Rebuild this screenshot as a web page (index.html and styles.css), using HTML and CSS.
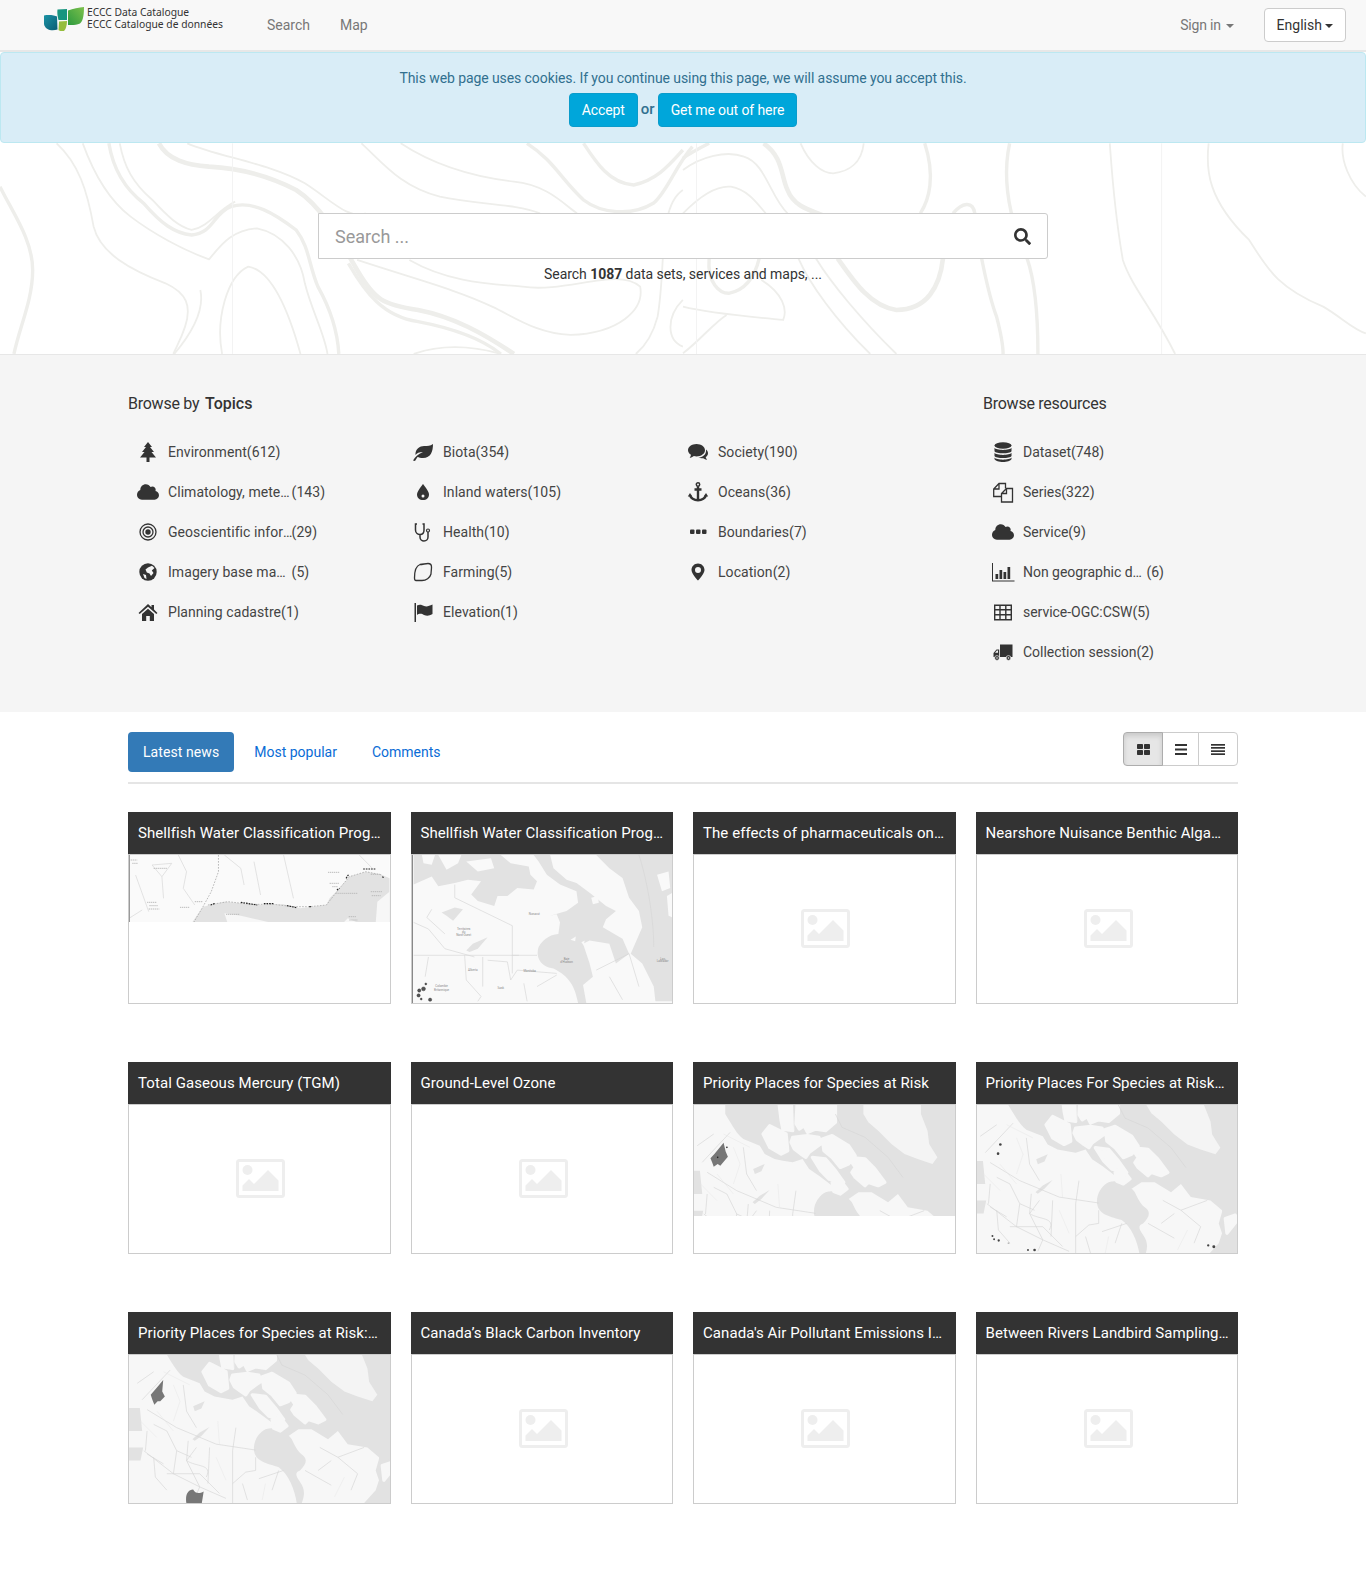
FILE: index.html
```html
<!DOCTYPE html>
<html lang="en">
<head>
<meta charset="utf-8">
<title>ECCC Data Catalogue</title>
<link rel="stylesheet" href="styles.css">
</head>
<body>
<svg class="defs" aria-hidden="true">
  <defs>
    <symbol id="i-cloud" viewBox="0 -64 640 640"><path d="M537.6 226.6c4.1-10.7 6.4-22.4 6.4-34.6 0-53-43-96-96-96-19.7 0-38.1 6-53.3 16.2C367 64.2 315.3 32 256 32c-88.4 0-160 71.6-160 160 0 2.7.1 5.4.2 8.1C40.2 219.8 0 273.2 0 336c0 79.5 64.5 144 144 144h368c70.7 0 128-57.3 128-128 0-61.9-44-113.6-102.4-125.4z"/></symbol>
    <symbol id="i-photo" viewBox="0 0 49 39">
      <rect x="1.5" y="1.5" width="46" height="36" rx="2" fill="none" stroke="#eee" stroke-width="3"/>
      <circle cx="11.5" cy="11" r="5" fill="#eee"/>
      <path d="M6.500 32v-5.500l6.500-6.500 5 5 14-14 10.500 10.500V32z" fill="#eee"/>
    </symbol>
    <g id="m-canada">
      <rect x="-60" y="-60" width="912" height="570" fill="#f7f7f7"/>
      <path class="w" d="M95 -60V0C120 40 130 60 150 75L200 95L215 120L245 135L270 140L300 145L330 135L350 165L380 185L420 215L440 240L470 255L500 235L540 235L590 265L620 240L650 280L710 290L745 320L745 340L792 335H860V-60Z"/>
      <path class="w" d="M400 235C430 225 460 240 480 265C490 285 495 300 515 315C530 330 520 345 505 360C490 365 490 375 505 395C520 415 520 435 510 460L495 460C490 420 470 370 440 350C410 340 370 335 365 300C362 270 380 245 400 235Z"/>
      <path class="w" d="M745 325L860 335V470H690L735 420L745 390L735 360Z"/>
      <path class="w" d="M-60 170H18L25 240H-60ZM-60 290H28L20 330H-60Z"/>
      <path d="M515 -60H690V0L710 50L715 90L740 130L725 150L680 135L640 120L600 90L560 50L530 25L515 0Z" fill="#f4f4f4"/>
      <path class="l grow" d="M255 -60H300V30L300 50L270 45L265 20ZM310 -60H430V25L400 50L370 45L345 55L335 35L320 45L305 20ZM230 35L250 45L280 60L285 110L265 120L230 100L210 60ZM300 70L345 65L380 70L385 90L350 115L340 130L325 120L305 105L295 85ZM390 75L420 65L470 95L490 125L470 150L445 160L420 130L395 110ZM470 130L520 135L550 165L580 205L560 215L530 205L520 215L490 190L480 175L490 160ZM420 205L450 205L465 225L445 240L425 232ZM360 130L400 135L430 170L455 205L410 195L385 170ZM755 345L785 335L792 350L760 390Z"/>
      <path class="w" d="M300 -60L304 50L310 -60ZM180 165L215 150L205 172L185 180ZM178 265L200 245L230 228L205 255L185 270Z"/>
      <path d="M40 175L130 230L250 280L370 298M25 145L110 55M310 230L300 300V460M230 290L225 400M10 95L60 60M160 330L165 270M30 300L120 370L200 410L280 445M100 370L200 370L260 430M60 220L100 240L130 300L120 370M40 310L90 340M160 330C190 350 240 340 220 380M370 320V360L340 365L300 400M620 320L680 370L660 420M560 360L600 330M440 360L420 420M150 100L160 180L190 230M430 0L450 40L520 70L590 130L635 190M40 240L35 300M60 320L65 380L100 420M130 300L175 320M330 400L345 450M380 385L455 360M565 290L620 320L700 290M520 360L600 405M190 290L160 330L200 410L185 445" class="ln"/>
      <path d="M120 100L140 150L120 210M70 180L120 240M255 210L260 280M90 60L170 100M20 210L70 260M250 320L280 390M400 400L390 450M640 380L610 440" class="ln2"/>
    </g>
  </defs>
</svg>

<header class="navbar">
  <a class="brand">
    <svg class="brand-mark" viewBox="0 0 40 24" aria-hidden="true">
      <defs>
        <linearGradient id="lg1" x1="0" y1="0" x2="1" y2="1"><stop offset="0" stop-color="#1b93a5"/><stop offset="1" stop-color="#0b5c74"/></linearGradient>
        <linearGradient id="lg2" x1="0" y1="1" x2="1" y2="0"><stop offset="0" stop-color="#2d9a3f"/><stop offset="1" stop-color="#7cc04b"/></linearGradient>
      </defs>
      <path d="M0 8.500C5 7.500 11 8.500 13 9.500L13.500 22.500C8 24.500 1 23 0 17Z" fill="url(#lg1)"/>
      <path d="M13.500 2.500L23 2V13L14.500 13C13.500 9 13 6 13.500 2.500Z" fill="#18957f"/>
      <path d="M15 14.500L23 14C23 18 22 22 20 24C17 24 15 24 14.500 23Z" fill="#95bd3c"/>
      <path d="M24 3.500C29 1.500 35 .5 40 0C40 6 39.500 14 36 16.500C32 18.500 27 18 24 18Z" fill="url(#lg2)"/>
    </svg>
    <span class="brand-text"><span>ECCC Data Catalogue</span><span>ECCC Catalogue de données</span></span>
  </a>
  <nav class="nav-links"><a>Search</a><a>Map</a></nav>
  <div class="nav-right">
    <a class="signin">Sign in <i class="caret"></i></a>
    <button class="lang">English <i class="caret"></i></button>
  </div>
</header>

<div class="hero">
  <svg class="topo" viewBox="0 0 1366 302" preserveAspectRatio="none" aria-hidden="true">
    <g transform="translate(0,-52)">
      <g transform="scale(.4355,.3333)">
        <path class="t2" d="M0 560C30 640 75 720 75 810C75 900 45 980 32 1062"/>
        <path class="t1" d="M130 430C180 490 200 570 215 680C230 760 300 810 380 850C430 880 440 920 425 980C415 1020 405 1040 398 1062"/>
        <path class="t2" d="M250 430C260 510 290 570 330 610C370 670 400 700 440 705C490 700 490 640 530 620C580 600 630 640 680 690C710 740 710 800 730 860C760 930 775 990 778 1062"/>
        <path class="t1" d="M275 430C285 500 305 550 350 600C385 650 410 680 440 690C480 680 500 630 540 605"/>
        <path class="t1" d="M190 430C215 520 250 600 300 650C350 700 420 750 480 778C505 740 530 690 590 685C650 700 690 770 700 850C715 930 745 1000 752 1062"/>
        <path class="t3" d="M365 430C385 480 430 495 480 500C560 505 620 530 680 570C740 620 780 720 820 810C860 900 880 915 960 930C1040 950 1110 1000 1180 1062"/>
        <path class="t1" d="M430 430C500 470 620 490 700 550C760 600 800 660 840 640"/>
        <path class="t1" d="M830 430C880 490 920 560 1010 590C1100 615 1180 610 1240 640"/>
        <path class="t1" d="M920 430C990 490 1080 530 1180 545C1260 555 1300 620 1325 640"/>
        <path class="t2" d="M1210 430C1270 480 1290 540 1340 600C1380 640 1450 650 1500 610C1530 580 1550 500 1590 440"/>
        <path class="t2" d="M1340 430C1370 490 1400 550 1455 555C1510 540 1540 490 1568 450"/>
        <path class="t1" d="M940 780C1020 840 1100 850 1200 860C1300 880 1420 800 1470 860C1480 930 1420 1000 1310 1005C1230 1000 1180 950 1130 920C1050 870 960 840 820 780"/>
        <path class="t1" d="M510 1062C495 960 520 830 570 800C620 810 660 920 690 1062"/>
        <path class="t1" d="M400 1062C440 1000 470 930 460 870"/>
        <path class="t2" d="M800 790C840 880 880 950 960 965C1040 985 1110 1020 1150 1062"/>
        <path class="t1" d="M950 1062C1020 1030 1090 1040 1150 1062"/>
        <path class="t1" d="M1568 570C1510 620 1530 800 1510 950C1500 1000 1480 1040 1460 1062"/>
        <path class="t1" d="M1568 900C1530 950 1530 1020 1568 1040"/>
        <path class="t0" d="M534 430V1062"/>
      </g>
      <g transform="translate(683,0) scale(.4355,.3333)">
        <path class="t3" d="M185 430C230 470 225 530 240 570C255 620 290 630 330 650"/>
        <path class="t2" d="M60 430C30 450 15 460 0 475"/>
        <path class="t1" d="M270 430C290 490 320 520 345 520C380 515 410 490 415 430"/>
        <path class="t2" d="M555 430C580 530 565 600 545 640"/>
        <path class="t2" d="M750 430C735 520 745 600 760 670"/>
        <path class="t2" d="M620 640C640 610 665 600 670 640C675 720 700 880 720 950C730 1000 735 1040 735 1062"/>
        <path class="t3" d="M597 775C590 860 560 930 490 930C430 920 390 840 355 775"/>
        <path class="t2" d="M60 775C55 850 85 880 105 880C145 870 165 830 175 775"/>
        <path class="t2" d="M790 775C810 850 815 960 815 1062"/>
        <path class="t1" d="M980 430C985 520 990 630 1010 780C1030 860 1080 930 1130 1062"/>
        <path class="t1" d="M1207 430C1200 510 1205 600 1300 720C1340 800 1360 860 1470 920C1510 950 1540 990 1568 1000"/>
        <path class="t1" d="M1515 430C1510 480 1530 550 1568 590"/>
        <path class="t1" d="M0 510C40 470 100 450 140 470C190 490 200 590 240 640"/>
        <path class="t1" d="M0 640C30 600 70 555 110 560C150 570 170 610 190 640"/>
        <path class="t1" d="M0 920C60 940 150 950 230 960C240 930 230 880 180 840"/>
        <path class="t1" d="M0 1060C40 1020 70 970 100 945"/>
        <path class="t1" d="M265 775C290 850 350 960 430 1062"/>
        <path class="t1" d="M305 775C340 850 410 960 490 1062"/>
        <path class="t0" d="M31 430V1062M1099 430V1062"/>
      </g>
    </g>
  </svg>
  <div class="alert">
    <p>This web page uses cookies. If you continue using this page, we will assume you accept this.</p>
    <div class="alert-actions"><a class="btn-cookie">Accept</a><span class="or">or</span><a class="btn-cookie">Get me out of here</a></div>
  </div>
  <div class="search">
    <div class="search-box">
      <span class="search-ph">Search ...</span>
      <svg class="search-icon" viewBox="0 0 512 512" aria-hidden="true"><path d="M505 442.700L405.300 343c-4.500-4.500-10.600-7-17-7H372c27.600-35.300 44-79.700 44-128C416 93.100 322.900 0 208 0S0 93.100 0 208s93.100 208 208 208c48.300 0 92.700-16.400 128-44v16.300c0 6.400 2.500 12.500 7 17l99.700 99.700c9.400 9.400 24.600 9.400 33.900 0l28.300-28.300c9.400-9.400 9.400-24.600.1-34zM208 336c-70.700 0-128-57.200-128-128 0-70.700 57.200-128 128-128 70.700 0 128 57.200 128 128 0 70.700-57.200 128-128 128z"/></svg>
    </div>
    <p class="search-sub">Search <b>1087</b> data sets, services and maps, ...</p>
  </div>
</div>

<section class="browse">
  <div class="browse-inner">
    <div class="topics">
      <h2 class="browse-title">Browse by <b>Topics</b></h2>
      <div class="topic-grid">
        <ul class="list">
          <li><svg class="ico" viewBox="0 0 22 22"><path d="M11 1L15 6H13L17 11H14.500L19 16.500H12.500V21H9.500V16.500H3L7.500 11H5L9 6H7Z"/></svg><a>Environment(612)</a></li>
          <li><svg class="ico"><use href="#i-cloud"/></svg><a><span class="cut">Climatology, meteorology, atmosphere</span> (143)</a></li>
          <li><svg class="ico" viewBox="0 0 22 22"><circle cx="11" cy="11" r="8" fill="none" stroke="#333" stroke-width="1.300"/><circle cx="11" cy="11" r="5" fill="none" stroke="#333" stroke-width="1.300"/><circle cx="11" cy="11" r="2.700"/></svg><a><span class="cut">Geoscientific information</span> (29)</a></li>
          <li><svg class="ico" viewBox="0 0 22 22"><circle cx="11" cy="11" r="8.700"/><path d="M11 6.500L15 4.800L17.500 7L14.800 9.500L16.500 12L14 15L12.500 12.500L9.800 11.500L8.500 8.500ZM6 13L9 14L9.500 18L7.500 17Z" fill="#f5f5f5"/></svg><a><span class="cut">Imagery base maps earth cover</span> (5)</a></li>
          <li><svg class="ico" viewBox="0 0 22 22"><path d="M11 3L14.500 6.200V4H17V8.500L20.500 12L19.300 13L11 5.800L2.700 13L1.500 12ZM5 13L11 7.800L17 13V20H12.800V15H9.200V20H5Z"/></svg><a>Planning cadastre(1)</a></li>
        </ul>
        <ul class="list">
          <li><svg class="ico" viewBox="0 0 22 22"><path d="M1 19.500C3 16 6 13 11 11C7 11 5 12 3.500 14C3 8 8 5 12 5C16 5 18 5 21 3C21 10 19 17 11 17C8.500 17 7 16.500 5.500 16L3 20Z"/></svg><a>Biota(354)</a></li>
          <li><svg class="ico" viewBox="0 0 22 22"><path d="M11 3C11 3 17 10 17 13.500C17 17 14.500 19 11 19C7.500 19 5 17 5 13.500C5 10 11 3 11 3Z"/><circle cx="11" cy="15" r="1.500" fill="#f5f5f5"/></svg><a>Inland waters(105)</a></li>
          <li><svg class="ico" viewBox="0 0 22 22"><path d="M5 3H3.500V9C3.500 12 6 13.500 8 13.500C10 13.500 12 12 12 9V3H10.500M8 13.500V16C8 18.500 10 20 12 20C14.500 20 16 18 16 16V11" fill="none" stroke="#333" stroke-width="1.500"/><circle cx="16" cy="9.500" r="1.500" fill="none" stroke="#333" stroke-width="1.200"/></svg><a>Health(10)</a></li>
          <li><svg class="ico" viewBox="0 0 22 22"><path d="M8 3.500C11 3.500 13 2.500 16 2.500C18 2.500 19.500 3.500 19.500 6C19.500 9 19 11 19 13C18 17 14 19.500 10 19.500C8 19.500 6 19.500 4 19.500C3 19.500 2.500 18.500 2.500 17C2.500 10 3.500 5 8 3.500Z" fill="none" stroke="#333" stroke-width="1.300"/></svg><a>Farming(5)</a></li>
          <li><svg class="ico" viewBox="0 0 22 22"><path d="M2.500 2H4V21H2.500ZM5 4.500C8 3 10 4 12 5C15 6 17 5 20.500 3.500V13C17 15 15 15 12 14C10 13 8 12 5 14Z"/></svg><a>Elevation(1)</a></li>
        </ul>
        <ul class="list">
          <li><svg class="ico" viewBox="0 0 22 22"><path d="M9.500 3C14.200 3 18 5.800 18 9.200C18 12.600 14.200 15.400 9.500 15.400C8.600 15.400 7.700 15.300 6.900 15.100C5.600 16.100 4 16.700 2.700 17C3.200 16.200 3.800 15 4 13.800C2.200 12.700 1 11 1 9.200C1 5.800 4.800 3 9.500 3Z"/><path d="M19 8.500C20.300 9.500 21 10.800 21 12.200C21 13.800 20 15.200 18.700 16.100C18.900 17.200 19.600 18.300 20 19C18.700 18.700 17.300 18.100 16.200 17.200C14.700 17.500 12.700 17.300 11.300 16.600C15.700 16.400 19.700 13.500 19 8.500Z"/></svg><a>Society(190)</a></li>
          <li><svg class="ico" viewBox="0 0 22 22"><circle cx="11" cy="3.500" r="1.700" fill="none" stroke="#333" stroke-width="1.500"/><path d="M11 5.300V19M7.500 8.500H14.500" fill="none" stroke="#333" stroke-width="2.400"/><path d="M3 14C3.500 17 7 19.200 11 19.200C15 19.200 18.500 17 19 14" fill="none" stroke="#333" stroke-width="2.400"/><path d="M.8 15.500L3 12L5.200 15.500ZM16.800 15.500L19 12L21.200 15.500Z"/></svg><a>Oceans(36)</a></li>
          <li><svg class="ico" viewBox="0 0 22 22"><rect x="3" y="8.500" width="4.500" height="4.500" rx="1"/><rect x="9" y="8.500" width="4.500" height="4.500" rx="1"/><rect x="15" y="8.500" width="4.500" height="4.500" rx="1"/></svg><a>Boundaries(7)</a></li>
          <li><svg class="ico" viewBox="0 0 22 22"><path fill-rule="evenodd" d="M11 2.500C7.400 2.500 4.500 5.400 4.500 9C4.500 13 11 19.500 11 19.500C11 19.500 17.500 13 17.500 9C17.500 5.400 14.600 2.500 11 2.500ZM11 6A3 3 0 1 1 11 12A3 3 0 1 1 11 6Z"/></svg><a>Location(2)</a></li>
        </ul>
      </div>
    </div>
    <div class="resources">
      <h2 class="browse-title">Browse resources</h2>
      <ul class="list">
        <li><svg class="ico" viewBox="0 0 22 22"><ellipse cx="11" cy="4.500" rx="8.500" ry="3.300"/><path d="M2.500 6.800C4 9.600 18 9.600 19.500 6.800V10.200C18 13 4 13 2.500 10.200ZM2.500 11.800C4 14.600 18 14.600 19.500 11.800V15C18 17.800 4 17.800 2.500 15ZM2.500 16.600C4 19.400 18 19.400 19.500 16.600V18C18 22 4 22 2.500 18Z"/></svg><a>Dataset(748)</a></li>
        <li><svg class="ico" viewBox="0 0 22 22"><path d="M9.500 15.500H1.700V8L7 2.500H13.500V7.500M7 2.500V8H2" fill="none" stroke="#333" stroke-width="1.300"/><path d="M9.500 21V12.500L14.500 7.500H20.500V21ZM14.500 7.500V12.500H9.500" fill="none" stroke="#333" stroke-width="1.300"/></svg><a>Series(322)</a></li>
        <li><svg class="ico"><use href="#i-cloud"/></svg><a>Service(9)</a></li>
        <li><svg class="ico" viewBox="0 0 22 22"><path d="M0 2H1V19.500H22.500V20.500H0Z"/><rect x="3.500" y="13" width="2.700" height="5"/><rect x="7.500" y="9" width="2.700" height="9"/><rect x="11.500" y="11" width="2.700" height="7"/><rect x="15.500" y="6" width="2.700" height="12"/></svg><a><span class="cut">Non geographic dataset</span> (6)</a></li>
        <li><svg class="ico" viewBox="0 0 22 22"><path d="M2.700 4.200H19.300V18.800H2.700ZM2.700 8.800H19.300M2.700 13.700H19.300M8 4.200V18.800M13.800 4.200V18.800" fill="none" stroke="#333" stroke-width="1.400"/></svg><a>service-OGC:CSW(5)</a></li>
        <li><svg class="ico" viewBox="0 0 22 22"><path d="M8 3.500H20.500V16H8ZM1.500 12L4.500 8.500H7.200V16H1.500Z"/><path d="M3 11.800L4.900 9.600H6V11.800Z" fill="#f5f5f5"/><g stroke="#f5f5f5" stroke-width=".7"><circle cx="5" cy="17" r="2.400"/><circle cx="16.500" cy="17" r="2.400"/></g><circle cx="5" cy="17" r=".8" fill="#f5f5f5"/><circle cx="16.500" cy="17" r=".8" fill="#f5f5f5"/></svg><a>Collection session(2)</a></li>
      </ul>
    </div>
  </div>
</section>

<main class="news">
  <div class="tabs">
    <div class="pills"><a class="pill active">Latest news</a><a class="pill">Most popular</a><a class="pill">Comments</a></div>
    <div class="view-group">
      <button class="view-btn on"><svg viewBox="0 0 13 11" width="13" height="11"><rect width="6" height="5" rx=".8"/><rect x="7" width="6" height="5" rx=".8"/><rect y="6" width="6" height="5" rx=".8"/><rect x="7" y="6" width="6" height="5" rx=".8"/></svg></button>
      <button class="view-btn"><svg viewBox="0 0 12 11" width="12" height="11"><rect width="12" height="2"/><rect y="4.500" width="12" height="2"/><rect y="9" width="12" height="2"/></svg></button>
      <button class="view-btn"><svg viewBox="0 0 14 11" width="14" height="11"><rect width="14" height="1.700"/><rect y="3" width="14" height="1.700"/><rect y="6.300" width="14" height="1.700"/><rect y="9.300" width="14" height="1.700"/></svg></button>
    </div>
  </div>

  <div class="cards">
    <article class="card">
      <h3>Shellfish Water Classification Program - Marine Water Quality</h3>
      <div class="thumb">
        <svg class="map short-1" viewBox="0 0 792 201" preserveAspectRatio="none">
          <rect width="792" height="201" fill="#fafafa"/>
          <path class="w" d="M190 205L225 155L290 140L400 150L470 148L520 160L600 150L610 130L640 100L670 65L720 50L770 60L792 70V205Z"/>
          <path class="l" d="M290 175L340 182L440 205H300ZM755 140L792 110V205H750ZM650 205L665 190L700 205Z"/>
          <path class="ln" d="M150 0L175 50L165 100L200 150M380 20L400 120M470 0L500 130M290 0L340 40L350 90M20 60L60 170M700 0L740 40M70 30L130 25L100 65L70 30M100 65L105 130M0 190L40 165"/>
          <path d="M272 0L272 50L250 110L225 155L195 205" fill="none" stroke="#999" stroke-width="2" stroke-dasharray="5 4"/>
          <path d="M240 150L300 140L370 148L440 148L500 155L550 155L600 150L640 100L670 65L720 50L770 60" fill="none" stroke="#999" stroke-width="2" stroke-dasharray="5 4"/>
          <path d="M248 150L262 145M340 142L390 150M410 146L440 146M480 152L510 158M548 155L556 155M632 105L640 100M660 70L668 58M712 42L750 42M770 65L775 68" fill="none" stroke="#222" stroke-width="3.500" stroke-dasharray="5 3"/>
          <path d="M5 15H25M10 25H28M75 40H115M55 142H85M62 152H88M60 162H92M200 140H225M155 157H185M295 178H335M605 52H640M610 85H640M618 95H635M630 115H695M735 110H770M738 122H765M668 185H690M670 195H695M735 58H765" fill="none" stroke="#bbb" stroke-width="3" stroke-dasharray="4 2"/>
          <rect width="3" height="201" fill="#999"/>
        </svg>
      </div>
    </article>
    <article class="card">
      <h3>Shellfish Water Classification Program - Sites</h3>
      <div class="thumb">
        <svg class="map" viewBox="0 0 792 450" preserveAspectRatio="none">
          <rect width="792" height="450" fill="#f9f9f9"/>
          <path class="w" d="M5 90L60 65L80 95L130 85L170 75L210 80L180 120L200 140L250 155L260 125L290 125L320 100L370 105L380 80L360 60L355 35L300 25L270 0H150L140 25L105 45L80 0H5Z"/>
          <path class="w" d="M370 0H420L430 40L470 75L500 85L540 115L590 155L620 170L590 195L580 220L640 255L660 300L620 330L600 270L540 260L520 270L540 330L550 370L520 395L530 450H505C495 400 480 370 430 345C390 340 375 310 385 280C400 250 430 240 445 240L450 205L440 180L420 185L470 170L505 145L500 110L450 90L410 60L385 20Z"/>
          <path class="w" d="M560 0L600 40L640 70L660 130L690 170L700 220L665 300L700 330L735 400L740 445H792V0Z"/>
          <path class="w" d="M90 175L130 160L155 165L125 200L105 185ZM165 290L185 270L230 250L200 285L175 295Z"/>
          <path fill="#f9f9f9" d="M745 60L780 50L785 100L760 110ZM775 125L792 115V190L780 185ZM545 130L565 125L568 145L550 150ZM482 258L498 248L496 262ZM515 265L525 260L522 275ZM30 0H70L60 30L35 25ZM165 20L240 10L250 40L200 50Z"/>
          <path class="ln" d="M5 305H380M130 90V130L305 215V305H325M305 305V360M160 305L165 380L210 430L200 445M50 310L40 370M5 205L50 225L100 285L190 310M215 310V400M230 320L290 325L300 380L320 350L440 360M340 390L350 445M380 400L440 365M560 350L660 300L690 400M600 370L640 440M60 165L45 190L100 240M690 0C710 60 735 180 735 280"/>
          <g class="lbl"><text x="372" y="182">Nunavut</text><text x="157" y="227">Territoires</text><text x="157" y="236">du</text><text x="157" y="247">Nord-Ouest</text><text x="185" y="353">Alberta</text><text x="358" y="356">Manitoba</text><text x="270" y="406">Sask</text><text x="470" y="319">Baie</text><text x="470" y="329">d'Hudson</text><text x="762" y="318">Lac</text><text x="762" y="326">Labrador</text><text x="90" y="402">Colombie</text><text x="90" y="413">Britannique</text></g>
          <rect width="3" height="450" fill="#888"/>
          <g fill="#555" stroke="#111" stroke-width="1"><circle cx="42" cy="392" r="3"/><circle cx="35" cy="407" r="6"/><circle cx="22" cy="412" r="5"/><circle cx="20" cy="427" r="5"/><circle cx="28" cy="438" r="3"/><circle cx="55" cy="440" r="5"/></g>
        </svg>
      </div>
    </article>
    <article class="card"><h3>The effects of pharmaceuticals on aquatic ecosystems</h3><div class="thumb empty"><svg class="ph"><use href="#i-photo"/></svg></div></article>
    <article class="card"><h3>Nearshore Nuisance Benthic Algae monitoring</h3><div class="thumb empty"><svg class="ph"><use href="#i-photo"/></svg></div></article>

    <article class="card"><h3>Total Gaseous Mercury (TGM)</h3><div class="thumb empty"><svg class="ph"><use href="#i-photo"/></svg></div></article>
    <article class="card"><h3>Ground-Level Ozone</h3><div class="thumb empty"><svg class="ph"><use href="#i-photo"/></svg></div></article>
    <article class="card">
      <h3>Priority Places for Species at Risk</h3>
      <div class="thumb">
        <svg class="map short-7" viewBox="0 -27 792 333" preserveAspectRatio="none">
          <use href="#m-canada"/>
          <path d="M90 86L62 120L50 133L55 145L60 158L72 150L80 155L103 128L96 112Z" fill="#777"/>
          <circle cx="72" cy="130" r="2.500" fill="#222"/><circle cx="100" cy="100" r="2.500" fill="#222"/>
        </svg>
      </div>
    </article>
    <article class="card">
      <h3>Priority Places For Species at Risk…</h3>
      <div class="thumb">
        <svg class="map" viewBox="0 0 792 450" preserveAspectRatio="none">
          <use href="#m-canada"/>
          <g fill="#444"><circle cx="71" cy="120" r="4"/><circle cx="64" cy="148" r="4"/><circle cx="47" cy="398" r="3"/><circle cx="52" cy="408" r="3"/><circle cx="66" cy="412" r="3.500"/><circle cx="155" cy="441" r="3"/><circle cx="175" cy="441" r="4"/><circle cx="703" cy="427" r="3.500"/><circle cx="720" cy="431" r="4.500"/></g>
          <circle cx="96" cy="420" r="3" fill="#bbb"/>
        </svg>
      </div>
    </article>

    <article class="card">
      <h3>Priority Places for Species at Risk:…</h3>
      <div class="thumb">
        <svg class="map" viewBox="-15 9 792 450" preserveAspectRatio="none">
          <use href="#m-canada"/>
          <path d="M89 85L70 108L51 130L56 145L62 160L72 150L80 150L94 135L86 120Z" fill="#777"/>
          <path d="M159 458C156 430 165 420 180 418C186 430 198 432 212 424L206 462H165Z" fill="#777"/>
        </svg>
      </div>
    </article>
    <article class="card"><h3>Canada’s Black Carbon Inventory</h3><div class="thumb empty"><svg class="ph"><use href="#i-photo"/></svg></div></article>
    <article class="card"><h3>Canada's Air Pollutant Emissions Inventory</h3><div class="thumb empty"><svg class="ph"><use href="#i-photo"/></svg></div></article>
    <article class="card"><h3>Between Rivers Landbird Sampling Program</h3><div class="thumb empty"><svg class="ph"><use href="#i-photo"/></svg></div></article>
  </div>
</main>
</body>
</html>
```
FILE: styles.css
```css
* { box-sizing: border-box; }
html, body { margin: 0; padding: 0; }
body {
  font-family: Roboto, "Liberation Sans", sans-serif;
  font-size: 14px;
  line-height: 20px;
  color: #333;
  background: #fff;
}
.defs { position: absolute; width: 0; height: 0; }
ul { list-style: none; margin: 0; padding: 0; }
p, h2, h3 { margin: 0; }

/* navbar */
.navbar {
  display: flex;
  align-items: center;
  height: 52px;
  padding: 0 20px 0 44px;
  background: #f8f8f8;
  border-bottom: 2px solid #e7e7e7;
}
.brand { display: flex; align-items: flex-start; gap: 3px; width: 223px; height: 50px; padding-top: 7px; }
.brand-mark { width: 40px; height: 24px; flex: none; }
.brand-text {
  display: flex;
  flex-direction: column;
  margin-top: -1px;
  font-family: "Noto Sans", "Open Sans", sans-serif;
  font-size: 10.3px;
  line-height: 12px;
  color: #333;
}
.nav-links { display: flex; gap: 30px; color: #777; }
.nav-right { display: flex; align-items: center; margin-left: auto; }
.signin { color: #777; margin-right: 30px; letter-spacing: -.2px; }
.caret {
  display: inline-block;
  width: 0;
  height: 0;
  margin-left: 2px;
  vertical-align: middle;
  border-top: 4px solid currentColor;
  border-left: 4px solid transparent;
  border-right: 4px solid transparent;
}
.lang {
  width: 82px;
  height: 34px;
  padding: 0;
  font: inherit;
  color: #333;
  background: #fff;
  border: 1px solid #ccc;
  border-radius: 4px;
}
.lang .caret { margin-left: 0; }

/* hero */
.hero { position: relative; overflow: hidden; background: #fff; }
.topo { position: absolute; inset: 0; width: 100%; height: 100%; }
.topo path { fill: none; stroke: #eeeeeb; vector-effect: non-scaling-stroke; }
.topo .t0 { stroke: #f3f3f3; stroke-width: 1; }
.topo .t1 { stroke-width: 1.800; }
.topo .t2 { stroke-width: 3.400; }
.topo .t3 { stroke-width: 4.600; }
.alert {
  position: relative;
  padding: 15px;
  text-align: center;
  color: #31708f;
  background: #d9edf7;
  border: 1px solid #bce8f1;
  border-radius: 4px;
}
.alert p { letter-spacing: -.085px; }
.alert-actions { display: flex; justify-content: center; align-items: center; gap: 3px; margin-top: 5px; }
.or { font-size: 15px; font-weight: 500; margin-top: -2px; }
.btn-cookie {
  height: 34px;
  padding: 6px 12px;
  color: #fff;
  background: #00a6da;
  border: 1px solid #0a9ccb;
  border-radius: 4px;
  letter-spacing: -.1px;
}
.search { position: relative; width: 730px; margin: 0 auto; padding: 70px 0; text-align: center; }
.search-box {
  display: flex;
  align-items: center;
  justify-content: space-between;
  height: 46px;
  padding: 2px 16px 0;
  background: #fff;
  border: 1px solid #ccc;
  border-radius: 0 3px 3px 0;
}
.search-ph { font-size: 18px; color: #999; }
.search-icon { width: 17px; height: 17px; fill: #333; margin-bottom: 2px; }
.search-sub { margin-top: 5px; letter-spacing: -.05px; }
.search-sub b { font-weight: 700; }

/* browse */
.browse { height: 358px; padding-top: 38px; background: #f5f5f5; border-top: 1px solid #e7e7e7; }
.browse-inner { display: flex; width: 1110px; margin: 0 auto; }
.topics { width: 855px; flex: none; }
.browse-title { font-size: 16px; font-weight: 400; letter-spacing: -.25px; line-height: 22px; margin-bottom: 17px; }
.browse-title b { font-weight: 500; letter-spacing: 0; margin-left: 2px; }
.topic-grid { display: grid; grid-template-columns: repeat(3, 275px); }
.list li { display: flex; align-items: center; height: 40px; padding-left: 9px; color: #444; white-space: nowrap; letter-spacing: .06px; }
.resources .list li { letter-spacing: -.03px; }
.ico { width: 22px; height: 22px; margin-right: 9px; flex: none; fill: #333; overflow: visible; }
.cut {
  display: inline-block;
  width: 125px;
  margin-right: -5px;
  overflow: hidden;
  white-space: nowrap;
  text-overflow: ellipsis;
  vertical-align: top;
}

/* news */
.news { width: 1110px; margin: 0 auto; padding: 20px 0 74px; }
.tabs { display: flex; justify-content: space-between; align-items: flex-start; height: 52px; border-bottom: 2px solid #e5e5e5; }
.pills { display: flex; gap: 5px; }
.pill { padding: 10px 15px; color: #0a6cd6; border-radius: 4px; }
.pill.active { color: #fff; background: #337ab7; letter-spacing: .08px; }
.view-group { display: flex; }
.view-btn {
  display: flex;
  align-items: center;
  justify-content: center;
  width: 37px;
  height: 34px;
  margin-left: -1px;
  padding: 0;
  background: #fff;
  border: 1px solid #ccc;
}
.view-btn svg { fill: #333; }
.view-btn:first-child { width: 40px; margin-left: 0; border-radius: 4px 0 0 4px; }
.view-btn:last-child { width: 40px; border-radius: 0 4px 4px 0; }
.view-btn.on { position: relative; background: #e6e6e6; border-color: #adadad; box-shadow: inset 0 3px 5px rgba(0, 0, 0, .125); }
.cards { display: grid; grid-template-columns: repeat(4, 1fr); column-gap: 20px; row-gap: 58px; margin-top: 28px; }
.card { height: 192px; display: flex; flex-direction: column; min-width: 0; }
.card h3 {
  height: 42px;
  flex: none;
  padding: 0 9px 0 10px;
  font-size: 15px;
  font-weight: 400;
  letter-spacing: .07px;
  line-height: 43px;
  color: #fff;
  background: #333;
  white-space: nowrap;
  overflow: hidden;
  text-overflow: ellipsis;
}
.thumb { flex: 1; display: flex; align-items: flex-start; border: 1px solid #ccc; background: #fff; min-height: 0; }
.thumb.empty { align-items: center; justify-content: center; padding: 0 0 2px 3px; }
.map { display: block; width: 100%; height: 100%; }
.map.short-1 { height: 67px; }
.map.short-7 { height: 111px; }
.map .w, .defs .w { fill: #e2e2e2; }
.map .l, .defs .l { fill: #f7f7f7; }
.defs .grow { stroke: #f7f7f7; stroke-width: 10; stroke-linejoin: round; }
.map .ln, .defs .ln { fill: none; stroke: #d6d6d6; stroke-width: 2; }
.map .ln2, .defs .ln2 { fill: none; stroke: #e6e6e6; stroke-width: 1.500; }
.lbl text { font-size: 9px; fill: #888; text-anchor: middle; }
.ph { width: 49px; height: 39px; }
```
